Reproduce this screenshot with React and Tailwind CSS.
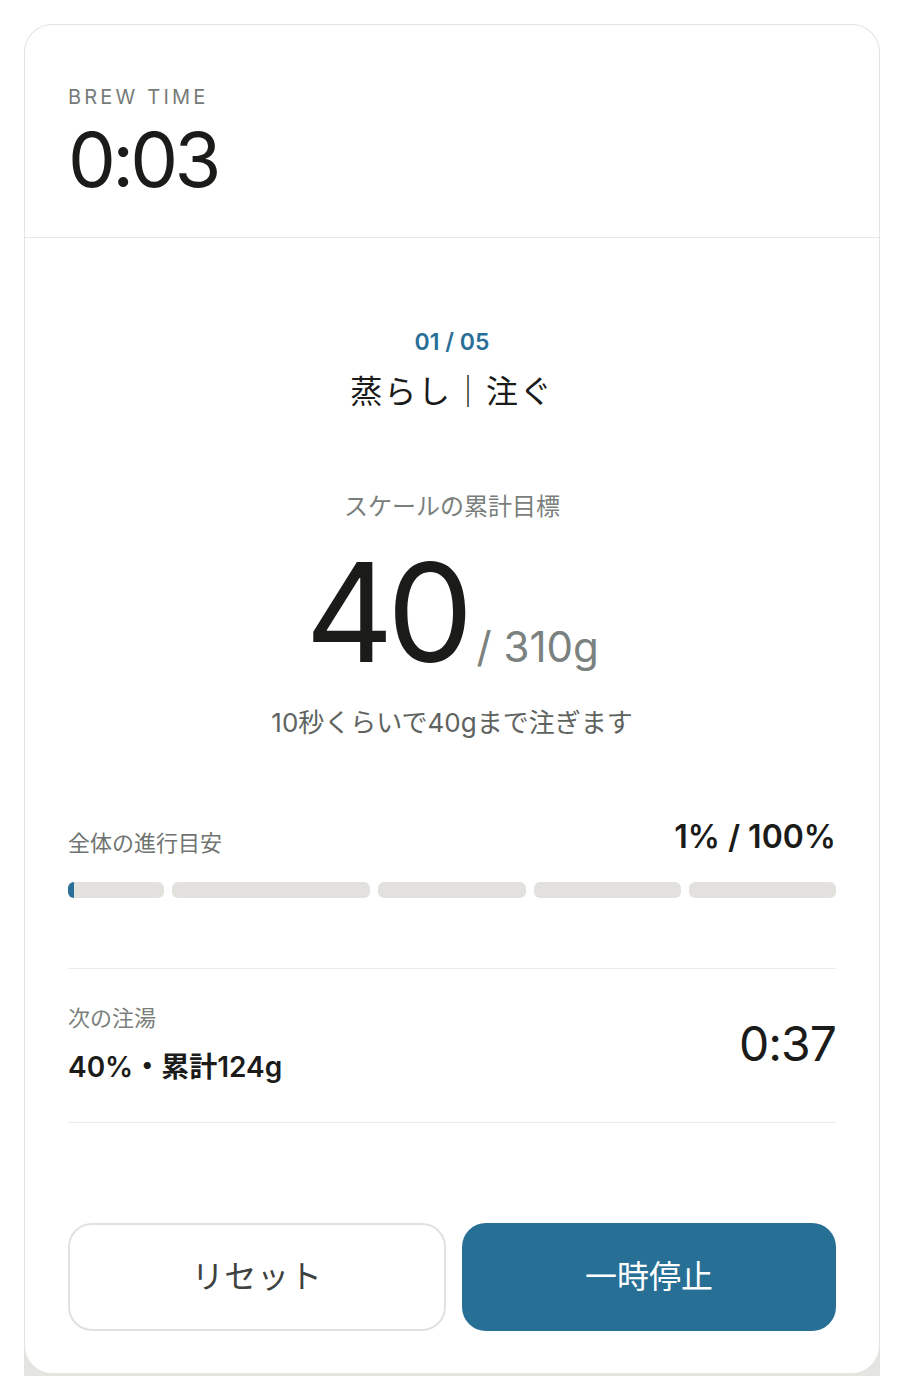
import React from "react";

const font = { fontFamily: "Inter, 'Noto Sans CJK JP', sans-serif" };

const segments = [96, 198, 148, 147, 147];

function App() {
  return (
    <div className="min-h-[1400px] bg-white px-6 pt-6" style={font}>
      <div className="flex h-[1352px] flex-col rounded-t-[28px] border border-[#e3e3df] bg-[#e4e4e0] pb-[2px]">
        <div className="flex-1 rounded-[27px] bg-white">
          {/* Header */}
          <div className="h-[213px] border-b border-[#e8e8e4] px-[43px] pt-[60px]">
            <div className="text-[20px] leading-6 tracking-[0.16em] text-[#767c79]">BREW TIME</div>
            <div className="mt-[12px] text-[76px] leading-none tracking-[-0.05em] text-[#1b1c1a]">0:03</div>
          </div>

          {/* Step */}
          <div className="px-[43px] pt-[90px]">
            <div className="text-center">
              <div className="text-[23px] font-semibold leading-7 text-[#2a6f97]">01 / 05</div>
              <div className="mt-[16px] text-[32px] leading-10 tracking-[0.06em] text-[#1b1c1a]">蒸らし｜注ぐ</div>

              <div className="mt-[81px] text-[24px] leading-7 text-[#7a7f7c]">スケールの累計目標</div>
              <div className="mt-[35px] flex items-baseline justify-center gap-[10px]">
                <span className="text-[137px] leading-[112px] tracking-[-0.05em] text-[#1b1c1a]">40</span>
                <span className="text-[42px] leading-none text-[#7a817e]">/ 310g</span>
              </div>
              <div className="mt-[39px] text-[26px] leading-8 text-[#5e6360]">10秒くらいで40gまで注ぎます</div>
            </div>

            {/* Overall progress */}
            <div className="mt-[78px]">
              <div className="flex items-end justify-between">
                <div className="text-[22px] leading-7 text-[#6f7471]">全体の進行目安</div>
                <div className="text-[32px] font-semibold leading-10 text-[#1b1c1a]">1% / 100%</div>
              </div>
              <div className="mt-[25px] flex gap-2">
                {segments.map((w, i) => (
                  <div
                    key={i}
                    className="relative h-4 overflow-hidden rounded-[6px] bg-[#e2e1de]"
                    style={{ flexGrow: w, flexBasis: 0 }}
                  >
                    {i === 0 && <div className="absolute inset-y-0 left-0 w-[6px] bg-[#2a6f97]" />}
                  </div>
                ))}
              </div>
            </div>

            {/* Next pour */}
            <div className="mt-[70px] flex items-center justify-between border-y border-[#ebebe7] pt-[35px] pb-[39px]">
              <div>
                <div className="text-[22px] leading-7 text-[#7a7f7c]">次の注湯</div>
                <div className="mt-[19px] text-[28px] font-semibold leading-8 text-[#1b1c1a]">40%・累計124g</div>
              </div>
              <div className="text-[48px] leading-none tracking-[-0.02em] text-[#1b1c1a]">0:37</div>
            </div>

            {/* Buttons */}
            <div className="mt-[100px] flex gap-4">
              <button className="h-[108px] flex-1 rounded-[24px] border-2 border-[#e1e1dd] bg-white text-[32px] tracking-[0.02em] text-[#3d4240]">
                リセット
              </button>
              <button className="h-[108px] flex-1 rounded-[24px] bg-[#286f96] text-[32px] text-white">
                一時停止
              </button>
            </div>
          </div>
        </div>
      </div>
    </div>
  );
}

export default App;
